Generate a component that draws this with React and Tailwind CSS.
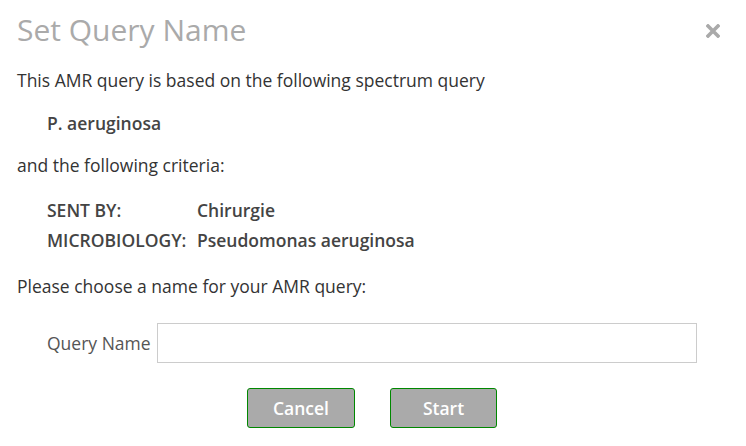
import React from "react";

const criteria = [
  { label: "SENT BY:", value: "Chirurgie" },
  { label: "MICROBIOLOGY:", value: "Pseudomonas aeruginosa" },
];

const App = () => {
  return (
    <div className="w-[746px] h-[446px] bg-white text-[#333] font-['Open_Sans',sans-serif] text-[17.5px] overflow-hidden">
      <div className="flex items-start justify-between pl-[17px] pr-[26px] pt-[10px]">
        <h1 className="text-[30px] leading-[40px] text-[#aaa]">Set Query Name</h1>
        <button className="mt-[14px] text-[#aaa]">
          <svg width="14" height="14" viewBox="0 0 14 14">
            <path d="M2 2 L12 12 M12 2 L2 12" stroke="currentColor" strokeWidth="3.6" strokeLinecap="square" />
          </svg>
        </button>
      </div>

      <div className="px-[17px]">
        <p className="mt-[19px] leading-[22px]">This AMR query is based on the following spectrum query</p>
        <p className="mt-[21px] pl-[30px] font-semibold text-[#444] leading-[22px]">P. aeruginosa</p>
        <p className="mt-[20px] leading-[22px]">and the following criteria:</p>

        <div className="mt-[23px] pl-[30px] flex flex-col gap-[8px] font-semibold text-[#444]">
          {criteria.map((c) => (
            <div key={c.label} className="flex leading-[22px]">
              <span className="w-[150px]">{c.label}</span>
              <span>{c.value}</span>
            </div>
          ))}
        </div>

        <p className="mt-[24px] leading-[22px]">Please choose a name for your AMR query:</p>

        <div className="mt-[26px] pl-[30px] flex items-center">
          <label className="text-[#555] mr-[6px]">Query Name</label>
          <input
            type="text"
            className="w-[540px] h-[40px] border border-[#ccc] outline-none px-2"
          />
        </div>
      </div>

      <div className="mt-[25px] flex justify-center gap-[35px] pr-[2px]">
        <button className="w-[108px] h-[40px] bg-[#aaa] border border-[#080] rounded-[3px] text-white font-semibold text-[17.5px]">
          Cancel
        </button>
        <button className="w-[107px] h-[40px] bg-[#aaa] border border-[#080] rounded-[3px] text-white font-semibold text-[17.5px]">
          Start
        </button>
      </div>
    </div>
  );
};

export default App;
